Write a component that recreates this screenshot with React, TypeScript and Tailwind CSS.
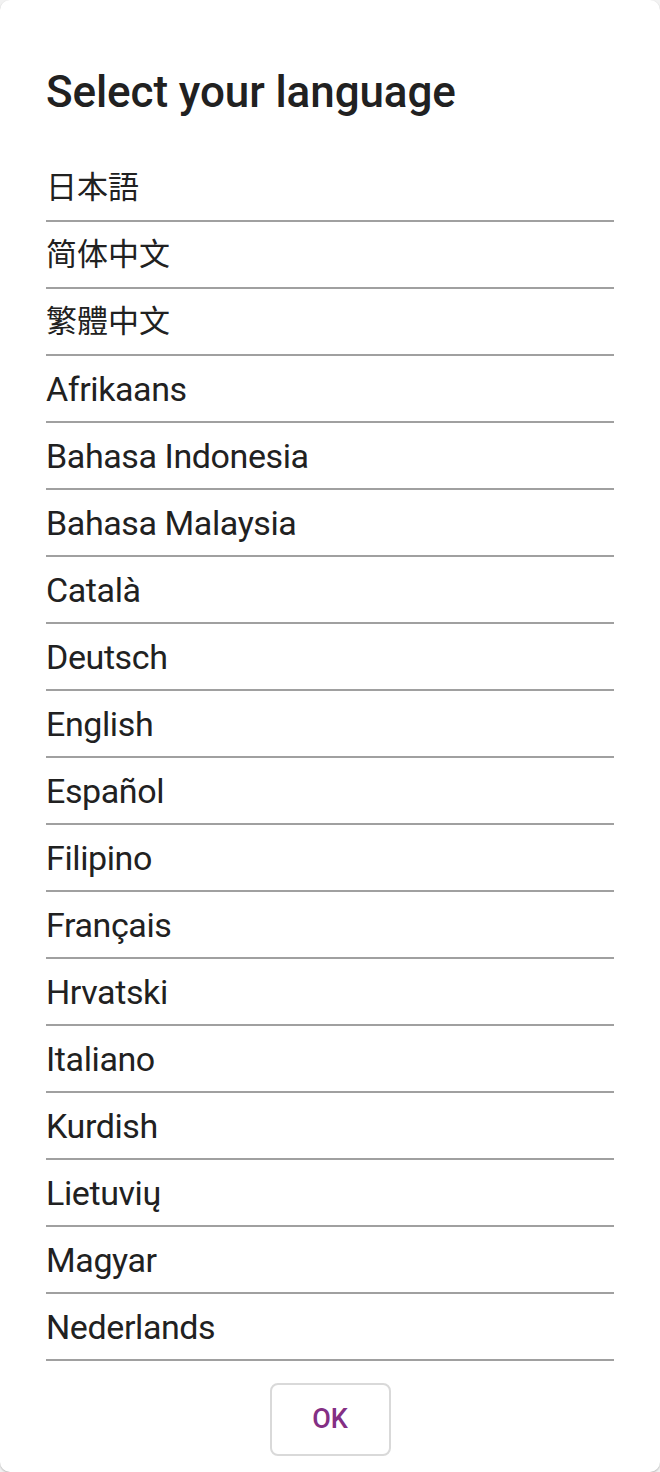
import React from "react"

const languages: { name: string; cjk?: string }[] = [
    { name: "日本語", cjk: "ja" },
    { name: "简体中文", cjk: "zh-Hans" },
    { name: "繁體中文", cjk: "zh-Hant" },
    { name: "Afrikaans" },
    { name: "Bahasa Indonesia" },
    { name: "Bahasa Malaysia" },
    { name: "Català" },
    { name: "Deutsch" },
    { name: "English" },
    { name: "Español" },
    { name: "Filipino" },
    { name: "Français" },
    { name: "Hrvatski" },
    { name: "Italiano" },
    { name: "Kurdish" },
    { name: "Lietuvių" },
    { name: "Magyar" },
    { name: "Nederlands" },
]

// CJK rows render a bit smaller than the latin ones on the device
const fontFor = (cjk?: string) => {
    if (cjk === "ja") return "text-[31px] font-['Roboto','Noto_Sans_CJK_JP',sans-serif]"
    if (cjk === "zh-Hans") return "text-[31px] font-['Roboto','Noto_Sans_CJK_SC',sans-serif]"
    if (cjk === "zh-Hant") return "text-[31px] font-['Roboto','Noto_Sans_CJK_TC',sans-serif]"
    return "text-[34px] tracking-[-0.4px] font-['Roboto',sans-serif]"
}

const App = () => {
    return (
        <div className="w-[660px] h-[1472px] bg-[#f2f2f2] font-['Roboto',sans-serif]">
            <div className="h-full bg-white rounded-[10px] flex flex-col px-[46px] shadow-[0_1px_2px_rgba(0,0,0,0.25)]">
                <h1 className="pt-[70px] text-[44px] leading-none font-medium text-[#212121] mb-[41px] tracking-[-0.1px]">
                    Select your language
                </h1>

                <ul>
                    {languages.map((it) => (
                        <li
                            key={it.name}
                            lang={it.cjk}
                            className={`h-[67px] flex items-center border-b-2 border-[#a0a0a0] leading-none text-[#212121] ${fontFor(it.cjk)}`}
                        >
                            {it.name}
                        </li>
                    ))}
                </ul>

                <div className="flex justify-center mt-[22px]">
                    <button
                        type="button"
                        className="w-[121px] h-[73px] rounded-lg border-2 border-[#d9d9d9] text-[27px] font-medium text-[#842f84]"
                    >
                        OK
                    </button>
                </div>
            </div>
        </div>
    )
}

export default App
